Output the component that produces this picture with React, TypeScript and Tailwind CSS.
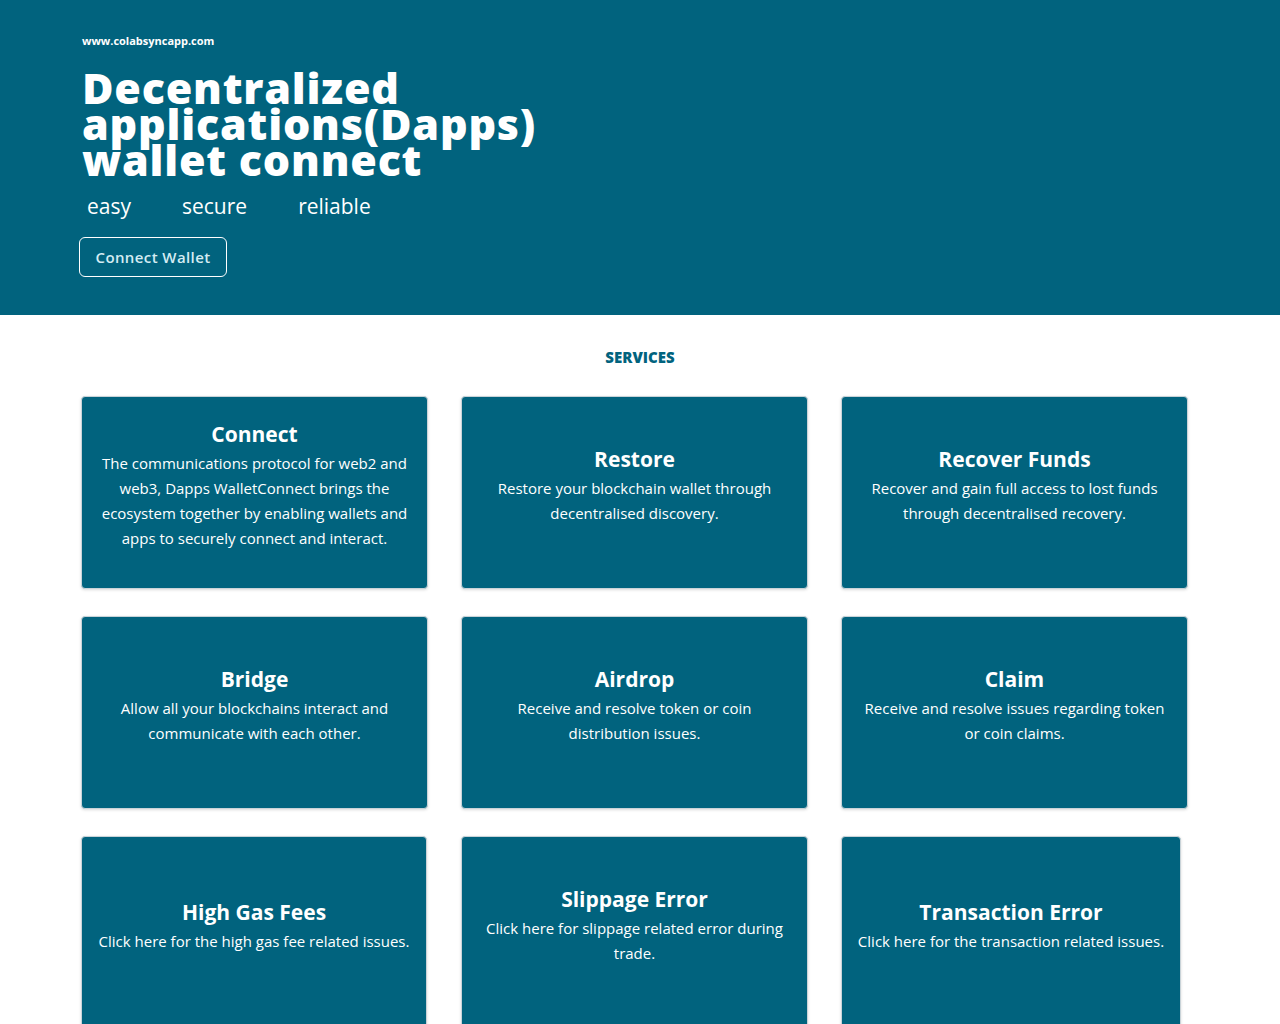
import React from "react";

const cards = [
  { t: "Connect", d: "The communications protocol for web2 and web3, Dapps WalletConnect brings the ecosystem together by enabling wallets and apps to securely connect and interact." },
  { t: "Restore", d: "Restore your blockchain wallet through decentralised discovery." },
  { t: "Recover Funds", d: "Recover and gain full access to lost funds through decentralised recovery." },
  { t: "Bridge", d: "Allow all your blockchains interact and communicate with each other." },
  { t: "Airdrop", d: "Receive and resolve token or coin distribution issues." },
  { t: "Claim", d: "Receive and resolve issues regarding token or coin claims." },
  { t: "High Gas Fees", d: "Click here for the high gas fee related issues." },
  { t: "Slippage Error", d: "Click here for slippage related error during trade." },
  { t: "Transaction Error", d: "Click here for the transaction related issues." },
];

export default function App() {
  return (
    <div className="min-h-[1024px] bg-white" style={{ fontFamily: '"Open Sans", "Noto Sans", sans-serif' }}>
      <header className="h-[315px] bg-[#01637e] px-[82px] pt-[34px] text-white">
        <div className="text-[11px] font-bold leading-[14px]">www.colabsyncapp.com</div>
        <h1 className="mt-[22px] text-[43px] font-extrabold leading-[36px] tracking-[0.8px]">
          Decentralized
          <br />
          applications(Dapps)
          <br />
          wallet connect
        </h1>
        <div className="mt-[14px] flex text-[21px] leading-[28px]">
          <span className="ml-[5px]">easy</span>
          <span className="ml-[51px]">secure</span>
          <span className="ml-[51px]">reliable</span>
        </div>
        <button className="mt-[17px] -ml-[3px] flex h-[40px] w-[148px] items-center justify-center rounded-[6px] border border-white text-[15px] font-semibold tracking-[0.4px] text-[#d4ecf3]">
          Connect Wallet
        </button>
      </header>
      <section className="px-[82px] pb-10">
        <h2 className="mt-[32px] text-center text-[15px] font-extrabold leading-[20px] text-[#01637e]">SERVICES</h2>
        <div className="mt-[29px] grid grid-cols-3 gap-x-[34px] gap-y-[27px] pr-[10px]">
          {cards.map((c, i) => (
            <div
              key={c.t}
              className={`-ml-[1px] flex h-[193px] flex-col items-center justify-center rounded-[4px] border border-[#c9d3d8] bg-[#01637e] px-[14px] pb-[14px] text-center text-white shadow-[0_1px_3px_rgba(0,0,0,0.15)] ${i === 8 ? "mr-[7px]" : ""} ${i === 6 ? "mr-[1px]" : ""}`}
            >
              <h3 className="text-[21px] font-bold leading-[28px]">{c.t}</h3>
              <p className="mt-[3px] text-[15px] leading-[25px]">{c.d}</p>
            </div>
          ))}
        </div>
      </section>
    </div>
  );
}
